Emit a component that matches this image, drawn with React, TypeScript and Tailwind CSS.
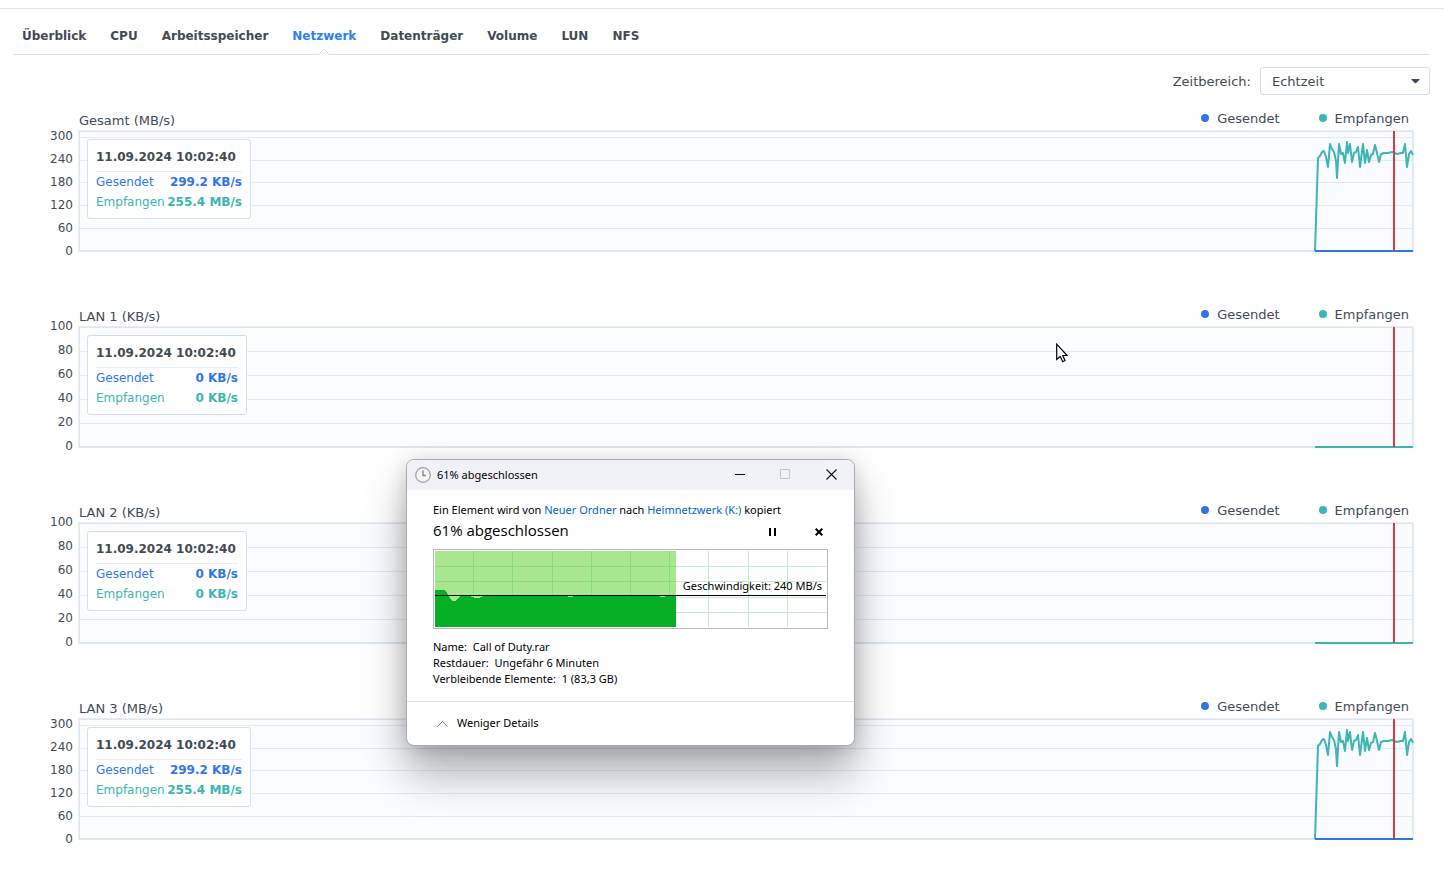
import React from "react";

const tabs = ["Überblick", "CPU", "Arbeitsspeicher", "Netzwerk", "Datenträger", "Volume", "LUN", "NFS"];

type Chart = {
  title: string;
  ticks: number[];
  step: number;
  first: number;
  busy: boolean;
  sent: string;
  received: string;
};

const charts: Chart[] = [
  { title: "Gesamt (MB/s)", ticks: [300, 240, 180, 120, 60, 0], step: 23, first: 6, busy: true, sent: "299.2 KB/s", received: "255.4 MB/s" },
  { title: "LAN 1 (KB/s)", ticks: [100, 80, 60, 40, 20, 0], step: 24, first: 0, busy: false, sent: "0 KB/s", received: "0 KB/s" },
  { title: "LAN 2 (KB/s)", ticks: [100, 80, 60, 40, 20, 0], step: 24, first: 0, busy: false, sent: "0 KB/s", received: "0 KB/s" },
  { title: "LAN 3 (MB/s)", ticks: [300, 240, 180, 120, 60, 0], step: 23, first: 6, busy: true, sent: "299.2 KB/s", received: "255.4 MB/s" },
];

const trace =
  "-99,120 -97,58 -96,27 -94,25 -92,21 -90,20 -88,26 -86,36 -84,13 -82,18 -80,21 -78,30 -77,47 -75,13 -73,23 -71,22 -69,32 -67,11 -66,22 -64,13 -62,31 -60,22 -58,21 -56,16 -54,36 -51,13 -49,32 -47,19 -45,31 -43,24 -41,23 -39,14 -37,22 -35,31 -33,23 -30,22 -26,22 -22,21 -17,23 -13,22 -11,22 -9,13 -7,36 -5,23 -3,20 -1,24";

function Plot({ chart }: { chart: Chart }) {
  return (
    <svg className="block h-[121px] w-full overflow-hidden" role="img" aria-label={chart.title}>
      <rect width="100%" height="121" fill="#fafcff" />
      {chart.ticks.map((t, i) => {
        const y = i === 5 ? 119 : chart.first + i * chart.step - (chart.busy && i > 1 ? 1 : 0);
        return <rect key={t} x="0" y={y} width="100%" height="1" fill="#e4eaf1" />;
      })}
      <rect width="100%" height="1" fill="#dfe6ee" />
      <rect y="119" width="100%" height="2" fill="#dde5ee" />
      <rect width="1" height="121" fill="#dfe6ee" />
      <svg x="100%" overflow="visible">
        <rect x="-2" width="2" height="121" fill="#e4eaf1" />
        {chart.busy && <polyline points={trace} fill="none" stroke="#3bb5b5" strokeWidth="2" strokeLinejoin="round" />}
        <rect x="-99" y="119" width="98" height="2" fill={chart.busy ? "#2f76eb" : "#3bb5b5"} />
        <rect x="-21" width="2" height="120" fill="#dc3a3a" />
      </svg>
    </svg>
  );
}

function Legend({ label, dot }: { label: string; dot: string }) {
  return (
    <span className="flex items-center gap-2">
      <span className={`-mt-0.5 size-2 rounded-full ${dot}`} />
      {label}
    </span>
  );
}

function ChartSection({ chart }: { chart: Chart }) {
  return (
    <section className="h-[196px] pr-[30px] pl-[78px]">
      <div className="flex h-[22px] items-center justify-between pr-[5px] pl-px">
        <h2 className="pt-1">{chart.title}</h2>
        <div className="flex gap-[39px]">
          <Legend label="Gesendet" dot="bg-[#2f76eb]" />
          <Legend label="Empfangen" dot="bg-[#3bb5b5]" />
        </div>
      </div>
      <div className="relative border-t border-l border-[#eaeff5]">
        <div className={`absolute right-full mr-1.5 text-right text-xs ${chart.busy ? "-top-1.5" : "-top-[13px]"}`}>
          {chart.ticks.map((t) => (
            <div key={t} className={chart.busy ? "h-[23px] leading-[23px]" : "h-6 leading-6"}>
              {t}
            </div>
          ))}
        </div>
        <Plot chart={chart} />
        <dl className={`absolute top-2 left-2 h-20 rounded-[3px] border border-[#d5dfea] bg-white px-2 pt-1.5 text-xs ${chart.busy ? "w-[164px]" : "w-40"}`}>
          <div className="h-[26px] border-b border-[#e8edf3] leading-[22px] font-bold">11.09.2024 10:02:40</div>
          <div className="flex h-5 items-center justify-between text-[#2f76eb]">
            <dt>Gesendet</dt>
            <dd className="font-bold">{chart.sent}</dd>
          </div>
          <div className="flex h-5 items-center justify-between text-[#3bb5b5]">
            <dt>Empfangen</dt>
            <dd className="font-bold">{chart.received}</dd>
          </div>
        </dl>
      </div>
    </section>
  );
}

function SpeedGraph() {
  const cols = [39, 78, 118, 157, 196, 235, 274, 314, 353];
  return (
    <div className="relative mt-[7px] border border-[#b8b8b8] p-px">
      <svg className="block h-[76px] w-full" viewBox="0 0 391 76" preserveAspectRatio="none" shapeRendering="crispEdges" role="img" aria-label="Übertragungsgeschwindigkeit">
        <rect width="391" height="76" fill="#fff" />
        {cols.map((x) => <rect key={x} x={x - 1} width="1" height="76" fill="#c4ecca" />)}
        {[15, 30, 46, 61].map((y) => <rect key={y} y={y} width="391" height="1" fill="#c4ecca" />)}
        <rect width="241" height="76" fill="#a8e68f" />
        {cols.slice(0, 6).map((x) => <rect key={x} x={x - 1} width="1" height="45" fill="#86dc78" />)}
        {[15, 30].map((y) => <rect key={y} y={y} width="241" height="1" fill="#86dc78" />)}
        <path d="M0 39h9l3 3 2 3 3 5h3l5-5h6l1-1h2v1l4 1 2 1h3l3-1 4-2h2v1H132l2 1h3l2-1H224l2 1h3l1-1H241V76H0z" fill="#06b025" />
        <rect y="44" width="391" height="1" fill="#000" />
      </svg>
      <span className="absolute right-[5px] bottom-[34px] leading-4">Geschwindigkeit: 240 MB/s</span>
    </div>
  );
}

function CopyDialog() {
  return (
    <div role="dialog" aria-label="61% abgeschlossen" className="absolute top-[459px] left-[406px] w-[449px] overflow-clip rounded-lg border border-[#a9abb0] bg-white font-['Noto_Sans','Open_Sans',sans-serif] text-[11px] text-black shadow-[0_28px_44px_rgba(0,0,0,0.3),0_2px_20px_rgba(0,0,0,0.16)]">
      <header className="flex h-[30px] items-center bg-[#f0f2f8] pl-2">
        <svg width="16" height="16" viewBox="0 0 16 16" aria-hidden="true">
          <circle cx="8" cy="8" r="7.3" fill="#f4f4f4" stroke="#a3a3a3" strokeWidth="1.3" />
          <path d="M8 3.5V8.5h3" fill="none" stroke="#8c8c8c" strokeWidth="1.5" />
        </svg>
        <span className="ml-1.5">61% abgeschlossen</span>
        <div className="ml-auto flex pb-0.5">
          <button aria-label="Minimieren" className="grid h-7 w-[45px] place-items-center">
            <svg width="10" height="10"><path d="M0 5.5h10" stroke="#111" /></svg>
          </button>
          <button aria-label="Maximieren" disabled className="grid h-7 w-[46px] place-items-center">
            <svg width="10" height="10"><rect x=".5" y=".5" width="9" height="9" rx=".5" fill="none" stroke="#c3c4c9" /></svg>
          </button>
          <button aria-label="Schließen" className="grid h-7 w-[46px] place-items-center">
            <svg width="11" height="11"><path d="M.5.5l10 10M10.500.5l-10 10" stroke="#111" strokeWidth="1.1" /></svg>
          </button>
        </div>
      </header>
      <div className="px-[26px] pt-3 pb-3.5">
        <p className="leading-4">
          Ein Element wird von <a href="#quelle" className="text-[#0066cc]">Neuer Ordner</a> nach <a href="#ziel" className="text-[#0066cc]">Heimnetzwerk (K:)</a> kopiert
        </p>
        <div className="flex h-6 items-center pr-px">
          <h1 className="font-['Open_Sans',sans-serif] text-[15px]">61% abgeschlossen</h1>
          <button aria-label="Anhalten" className="mt-1 mr-7 ml-auto grid size-5 place-items-center">
            <svg width="8" height="8"><path d="M0 0h2v8H0zM5 0h2v8H5z" /></svg>
          </button>
          <button aria-label="Abbrechen" className="mt-1 grid size-4 place-items-center">
            <svg width="8" height="8"><path d="M.7.7l6.600 6.600M7.300.7L.7 7.300" stroke="#000" strokeWidth="2" /></svg>
          </button>
        </div>
        <SpeedGraph />
        <div className="mt-2.5 leading-4">
          <p>Name:&nbsp; Call of Duty.rar</p>
          <p>Restdauer:&nbsp; Ungefähr 6 Minuten</p>
          <p>Verbleibende Elemente:&nbsp; 1 (83,3 GB)</p>
        </div>
      </div>
      <footer className="flex h-11 items-center border-t border-[#dfdfdf] pl-[30px]">
        <button className="flex items-center gap-[9px]">
          <svg width="11" height="6"><path d="M.5 5.500l5-5 5 5" fill="none" stroke="#777" /></svg>
          Weniger Details
        </button>
      </footer>
    </div>
  );
}

export default function App() {
  return (
    <main className="relative bg-white pt-2 font-['DejaVu_Sans',sans-serif] text-[13px] text-[#414b55]">
      <nav className="border-t border-[#dfe6ef] px-3.5">
        <ul className="flex h-[46px] gap-6 border-b border-[#d3deea] px-2 text-xs font-bold">
          {tabs.map((t) => (
            <li key={t} className="relative flex h-[46px] items-center">
              <a href={`#${t}`} className={t === "Netzwerk" ? "pt-2 text-[#2f80f0]" : "pt-2"}>{t}</a>
              {t === "Netzwerk" && (
                <svg className="absolute bottom-0 left-1/2 -translate-x-1/2" width="13" height="7">
                  <path d="M0 7h1l5.500-5.500L12 7h1z" fill="#fff" />
                  <path d="M.5 6.500h.5l5.500-5.500 5.500 5.500h.5" fill="none" stroke="#d3deea" />
                </svg>
              )}
            </li>
          ))}
        </ul>
      </nav>
      <div className="flex items-center justify-end gap-[9px] px-3.5 pt-3 pb-[13px]">
        <label htmlFor="range" className="pt-0.5">Zeitbereich:</label>
        <div className="relative">
          <select id="range" className="h-7 w-[170px] appearance-none rounded-[3px] border border-[#d3deea] bg-white px-[11px] pt-0.5">
            <option>Echtzeit</option>
          </select>
          <svg className="pointer-events-none absolute top-3 right-2.5" width="9" height="5"><path d="M.5 0h8v.7L5 4.200H4L.5.7z" fill="#414b55" /></svg>
        </div>
      </div>
      {charts.map((c) => <ChartSection key={c.title} chart={c} />)}
      <CopyDialog />
      <svg className="absolute top-[343px] left-[1056px]" width="13" height="20" viewBox="0 0 13 20" aria-hidden="true">
        <path d="M.7 1.200v15.300l3.500-3 2.600 5.200 2.200-1.200-2.300-5h4.400z" fill="#fff" stroke="#000" strokeWidth="1.200" />
      </svg>
    </main>
  );
}
